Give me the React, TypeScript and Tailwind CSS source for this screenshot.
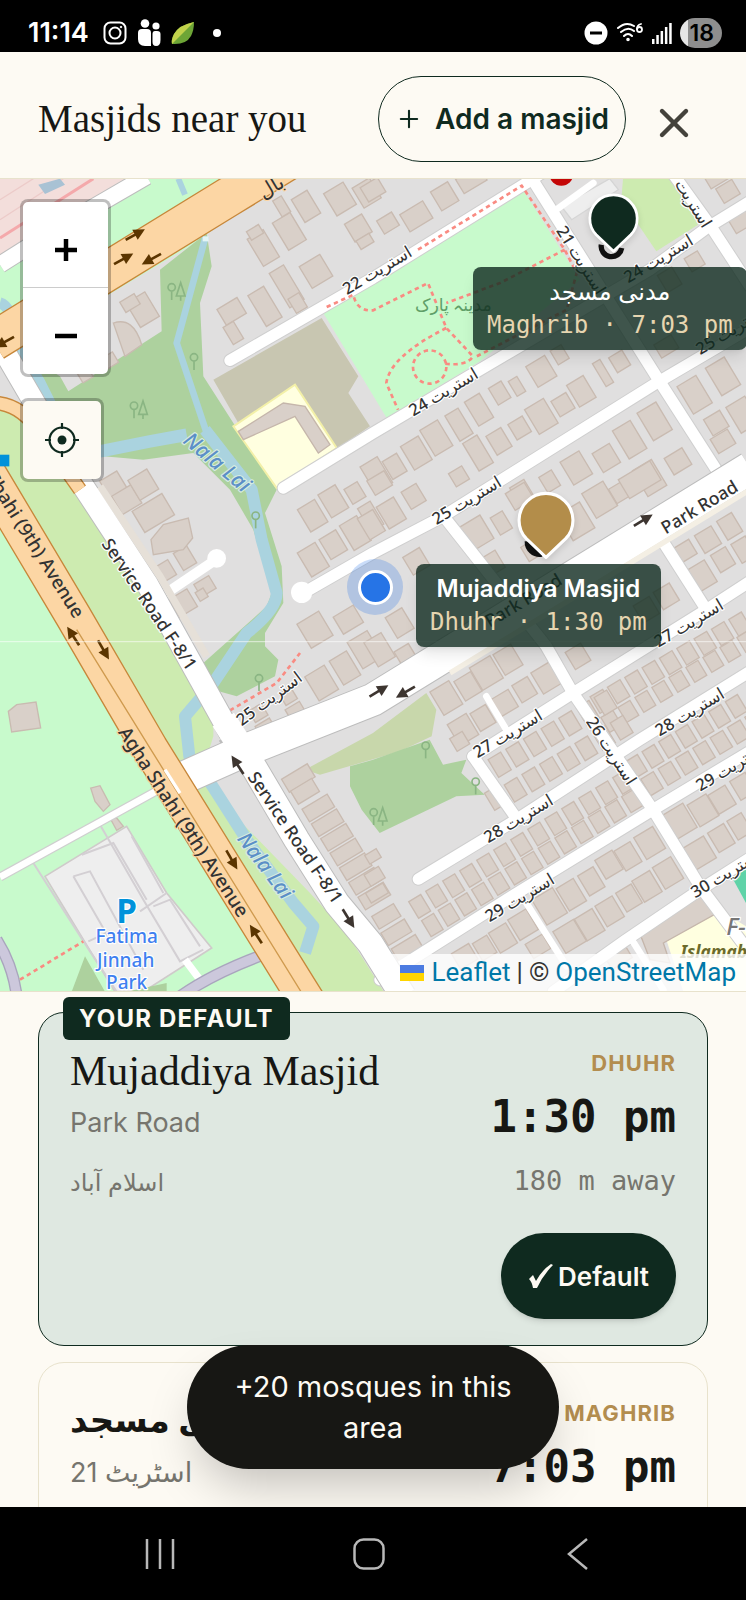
import React from "react";
import { Plus, X } from "lucide-react";

const SANS = "font-[Inter,'DejaVu_Sans',sans-serif]";
const SERIF = "font-['Liberation_Serif','DejaVu_Sans',serif]";
const MONO = "font-['DejaVu_Sans_Mono',monospace]";

type Box = [number, number, number, number];

/* Evenly stepped houses along a street. */
const row = (x: number, y: number, n: number, dx: number, dy: number, w: number, h: number): Box[] =>
  Array.from({ length: n }, (_, i) => [x + i * dx, y + i * dy, w, h]);

const northWest: Box[] = [
  [1020, 88, 68, 78], [918, 110, 55, 80], [868, 185, 62, 95], [845, 110, 30, 55], [790, 235, 56, 95],
  [765, 188, 42, 30], [1075, 175, 60, 62], [1095, 215, 45, 30], [1100, 70, 60, 70], [948, 305, 72, 76],
  [860, 350, 50, 120], [893, 400, 38, 50], [795, 410, 55, 108], [695, 425, 70, 55], [700, 490, 36, 60],
  [428, 420, 66, 85], [390, 400, 50, 36], [325, 575, 50, 36], [255, 615, 36, 36],
];

const northEast: Box[] = [
  [0, 60, 60, 50], [45, 160, 52, 46], [130, 140, 80, 60], [215, 80, 60, 66], [295, 30, 80, 50],
  [505, 605, 66, 72], [560, 555, 38, 48], [380, 670, 44, 58], [432, 650, 30, 52], [690, 610, 26, 80],
  [740, 575, 46, 52], [625, 665, 58, 76], [570, 705, 52, 54], [318, 720, 52, 84], [258, 765, 46, 88],
  [190, 805, 62, 90], [130, 850, 62, 82], [65, 890, 50, 62], [505, 740, 66, 86], [440, 775, 50, 54],
  [378, 815, 52, 66], [315, 850, 50, 96], [258, 920, 46, 46], [10, 915, 60, 90], [845, 755, 66, 96],
  [770, 810, 62, 98], [700, 865, 60, 66], [915, 875, 62, 58], [610, 895, 66, 80], [530, 935, 44, 54],
  [830, 925, 66, 90], [965, 675, 66, 96], [1050, 620, 66, 96], [1030, 760, 56, 56], [1050, 815, 60, 50],
  [1110, 735, 66, 90], [965, 275, 46, 46], [1100, 150, 60, 62], [1065, 65, 56, 50], [1030, 25, 60, 40],
  [445, 965, 50, 54], [890, 330, 50, 60], [880, 530, 60, 46], [745, 965, 60, 50],
];

const west: Box[] = [
  [340, 15, 60, 60], [380, 60, 68, 64], [430, 15, 66, 70], [460, 100, 104, 74], [495, 275, 50, 52],
  [555, 235, 46, 60], [550, 370, 62, 62], [615, 320, 52, 44], [605, 345, 28, 30], [938, 108, 60, 78],
  [1000, 65, 60, 80], [1065, 40, 46, 52], [940, 240, 62, 84], [1000, 195, 58, 70], [1066, 160, 60, 86],
  [1112, 110, 44, 80], [945, 450, 76, 84], [1045, 420, 70, 60], [1095, 510, 70, 92], [965, 610, 68, 84],
  [1035, 565, 60, 84], [890, 700, 50, 52], [800, 750, 50, 52], [775, 700, 44, 40], [865, 650, 40, 40],
];

const east: Box[] = [
  [122, 50, 52, 60], [55, 100, 60, 76], [-5, 135, 54, 74], [20, 10, 60, 50], [440, 50, 66, 58],
  [680, 60, 74, 86], [800, 0, 110, 66], [310, 160, 74, 82], [385, 130, 42, 60], [130, 245, 58, 62],
  [610, 125, 76, 90], [480, 210, 56, 50], [360, 250, 50, 60], [1070, 140, 52, 66], [1005, 180, 58, 62],
  [935, 215, 58, 50], [1050, 240, 52, 60], [985, 290, 66, 76], [1112, 210, 50, 66], [615, 530, 54, 60],
  [340, 580, 72, 78], [405, 540, 62, 72], [285, 620, 58, 68], [220, 655, 66, 82], [520, 595, 64, 74],
  [455, 630, 54, 60], [395, 670, 60, 60], [330, 715, 54, 62], [270, 750, 66, 74], [80, 430, 58, 72],
  [20, 510, 60, 84], [100, 530, 50, 60], [880, 350, 56, 60], [820, 390, 56, 60],
  ...row(685, 665, 9, 52, -29, 44, 58), ...row(715, 725, 9, 51, -30, 42, 52),
];

const southWest: Box[] = [
  [895, 115, 90, 46], [915, 155, 74, 46], ...row(955, 205, 7, 28, 44, 88, 44),
];

const southEast: Box[] = [
  ...row(380, 75, 7, 53, -31, 44, 62), ...row(428, 150, 7, 53, -31, 44, 60),
  ...row(140, 500, 13, 51, -31, 42, 58), ...row(178, 556, 13, 50, -31, 42, 56),
  ...row(790, 80, 7, 50, -30, 42, 58), ...row(837, 132, 7, 52, -31, 44, 58),
  [530, 500, 72, 88], [595, 465, 60, 78], [655, 425, 54, 70], [708, 375, 60, 66], [765, 350, 56, 70],
  [830, 310, 66, 76], [590, 590, 72, 76], [650, 555, 62, 76], [710, 515, 60, 72], [768, 475, 54, 66],
  [822, 440, 62, 74], [885, 400, 64, 76], [920, 245, 72, 84], [990, 212, 66, 76], [1047, 180, 60, 66],
  [1110, 140, 54, 66], [980, 340, 72, 76], [1045, 295, 56, 68], [1100, 260, 50, 66], [450, 555, 64, 72],
  [390, 595, 60, 70], [335, 625, 50, 60], [275, 650, 60, 54], [495, 620, 60, 50], [735, 650, 70, 50],
  [40, 530, 76, 44], [70, 578, 82, 44], [102, 625, 84, 44], [5, 410, 50, 40], [12, 460, 60, 34],
  [0, 350, 40, 30], [260, 5, 44, 44], [360, 180, 24, 60],
];

function Houses({ x, y, items }: { x: number; y: number; items: Box[] }) {
  return (
    <g transform={`translate(${x} ${y})`} fill="#d9d0c9" stroke="#c9bbb1" strokeWidth="4">
      {items.map(([cx, cy, w, h], i) => (
        <rect key={i} x={cx - w / 2} y={cy - h / 2} width={w} height={h} transform={`rotate(-31 ${cx} ${cy})`} />
      ))}
    </g>
  );
}

function Arrow({ x, y, r, c = "#3d3530" }: { x: number; y: number; r: number; c?: string }) {
  return (
    <g transform={`translate(${x} ${y}) rotate(${r})`} fill={c}>
      <rect x="-32" y="-4" width="36" height="8" />
      <path d="M0 -17 34 0 0 17Z" />
    </g>
  );
}

function Trees({ x, y, two = true }: { x: number; y: number; two?: boolean }) {
  return (
    <g transform={`translate(${x} ${y})`} fill="none" stroke="#8ab583" strokeWidth="5">
      <circle cx="-13" cy="-12" r="11" />
      <path d="M-13 0V26" />
      {two && <path d="M14 -26 1 14H27ZM14 14V28" />}
    </g>
  );
}

type LabelProps = { x: number; y: number; r?: number; size?: number; c?: string; halo?: string; italic?: boolean; weight?: number; children: string };
function Label({ x, y, r = 0, size = 53, c = "#333", halo = "#fff", italic, weight = 500, children }: LabelProps) {
  return (
    <text
      transform={`translate(${x} ${y}) rotate(${r})`}
      textAnchor="middle"
      dominantBaseline="central"
      fontFamily="'Noto Sans','DejaVu Sans',sans-serif"
      fontSize={size}
      fontStyle={italic ? "italic" : "normal"}
      fontWeight={weight}
      fill={c}
      stroke={halo}
      strokeWidth="7"
      strokeLinejoin="round"
      paintOrder="stroke"
    >
      {children}
    </text>
  );
}

const STREETS = [
  "M690 572 1119 325 1579 40 1640 0",
  "M1585 10 1969 620 2149 900",
  "M850 955 1119 790 1440 600 1950 300 2120 175 2250 95",
  "M2010 0 2129 165 2250 350",
  "M910 1270 1119 1150 1329 1040 1969 640 2250 475",
  "M1339 1050 1639 1430 1719 1570 1959 1920 2100 2150 2250 2350",
  "M1979 1100 2119 1320",
  "M1419 1760 1719 1570 2119 1320 2250 1235",
  "M1419 1760 1545 1940",
  "M1255 2128 1549 1950 1919 1710 2250 1505",
  "M1140 2430 1519 2190 1959 1920 2250 1745",
  "M1660 2466 1879 2310 2100 2160 2250 2065",
];
const LANES = ["M1459 1580 1519 1680", "M1579 2200 1700 2390", "M1889 2300 1990 2460", "M1655 130 1780 40"];

function MapCanvas() {
  return (
    <svg viewBox="0 27 2238 2439" preserveAspectRatio="xMidYMid slice" className="block size-full" role="img" aria-label="Street map">
      <rect width="2238" height="2480" fill="#e0dfdf" />

      {/* land use */}
      <path d="M0 0H900L560 235 0 570Z" fill="#c8facc" />
      <path d="M0 0H420L0 260Z" fill="#f3dedb" />
      <path d="M0 205 280 27" stroke="#f4a9ab" strokeWidth="9" fill="none" />
      <path d="M0 150 190 27M0 90 100 27" stroke="#eccbc9" strokeWidth="4" fill="none" />
      <path d="M115 45 180 27 195 45 135 73Z" fill="#a9c2d4" />
      <path d="M0 900 500 1720 960 2480H0Z" fill="#c8facc" />
      <path d="M0 690 60 720 240 960 640 1640V1700L600 1830 930 2170 1040 2290 1160 2480H960L500 1720 0 900Z" fill="#cdebb0" />
      <path d="M620 190 635 290 600 400 610 620 700 760 830 960 795 1030 845 1190 850 1300 795 1390 795 1430 835 1470 825 1520 710 1580 640 1560 610 1480 800 1310 815 1270 760 1080 690 960 580 850 430 870 310 860 150 720 50 540 180 620 205 665 485 485 480 300Z" fill="#add19e" />
      <path d="M970 430 1119 345 1569 60 1740 330 1440 575 1160 745Z" fill="#c8facc" />
      <path d="M640 630 965 445 1075 620 1045 670 1110 770 830 960Z" fill="#c8c6b1" />
      <path d="M700 770 885 645 1010 835 830 955Z" fill="#ffffe0" stroke="#f3f0a8" strokeWidth="6" />
      <path d="M715 785 850 700 915 710 990 825 955 850 885 740 730 810Z" fill="#d9d0c9" stroke="#c5b6ab" strokeWidth="4" />
      <path d="M1869 27H2019L2094 165 1969 245 1864 90Z" fill="#cdebb0" />
      <path d="M1684 110 1829 27 1855 60 1715 150Z" fill="#eee" stroke="#d5d5d5" strokeWidth="4" />
      <path d="M915 1800 1119 1690 1279 1570 1309 1620 1295 1700 1200 1745 960 1815Z" fill="#c8d7ab" />
      <path d="M1050 1790 1119 1770 1289 1710 1329 1785 1399 1770 1384 1810 1454 1875 1369 1880 1139 1990 1085 1920 1050 1850Z" fill="#add19e" />
      <path d="M1999 2310 2164 2225 2238 2270V2466H2050Z" fill="#ffffe0" />
      <path d="M1919 2290 2119 2170 2170 2220 1990 2320 2010 2380 1950 2370Z" fill="#d9d0c9" stroke="#c5b6ab" strokeWidth="4" />
      <path d="M2200 2130 2238 2085V2200Z" fill="#5fd3a8" />

      {/* water */}
      <g fill="none" stroke="#aad3df" strokeLinejoin="round">
        <path d="M535 27 555 75" strokeWidth="18" />
        <path d="M0 400Q40 410 60 540L120 640 160 720" strokeWidth="34" />
        <path d="M300 845 450 815 560 795" strokeWidth="38" />
        <path d="M617 200 530 520 620 790" strokeWidth="20" />
        <path d="M617 200 617 215" stroke="#e4f5f5" strokeWidth="18" />
        <path d="M615 780 755 960 785 1110 830 1270Q830 1320 740 1390L640 1540 555 1640 568 1760 625 1830 740 2010 880 2200 940 2270 915 2350" strokeWidth="36" />
      </g>

      <Houses x={0} y={0} items={northWest} />
      <Houses x={1119} y={0} items={northEast} />
      <Houses x={0} y={930} items={west} />
      <Houses x={1119} y={930} items={east} />
      <Houses x={0} y={1710} items={southWest} />
      <Houses x={1119} y={1710} items={southEast} />
      <g fill="#d9d0c9" stroke="#c9bbb1" strokeWidth="4">
        <path d="M340 460Q400 440 425 525L375 560Z" />
        <path d="M453 1110 490 1065 565 1045 578 1105 550 1140 460 1155Z" />
        <path d="M25 1625 50 1605 108 1597 122 1675 35 1687Z" />
        <path d="M272 1855 300 1848 330 1905 310 1925 285 1895ZM330 1945 350 1945 370 1970 350 1982Z" />
      </g>

      {/* car park */}
      <path d="M135 2120 380 1970 500 2170 635 2335 430 2466H345Z" fill="#eee" stroke="#cfcaca" strokeWidth="5" />
      <g fill="none" stroke="#d3cfd3" strokeWidth="6">
        <path d="M100 2080 270 2345 350 2466M300 1965 430 2190 540 2375 610 2340M220 2120 270 2105 430 2400M220 2120 330 2310M245 2055 340 2020 440 2190M395 2000 490 2170M265 2315 330 2285M420 2225 500 2170M460 2210 510 2190 600 2330" />
      </g>
      <path d="M255 2360 215 2466H315ZM380 2466 500 2440V2466Z" fill="#add19e" />

      {/* residential streets */}
      <g fill="none" stroke="#cfcfcf" strokeWidth="40" strokeLinecap="round" strokeLinejoin="round">
        {STREETS.map((d) => <path key={d} d={d} />)}
      </g>
      <g fill="none" stroke="#fff" strokeWidth="34" strokeLinecap="round" strokeLinejoin="round">
        {STREETS.map((d) => <path key={d} d={d} />)}
      </g>
      <g fill="none" stroke="#fff" strokeWidth="20" strokeLinecap="round">
        {LANES.map((d) => <path key={d} d={d} />)}
      </g>
      <path d="M470 1290 650 1168" stroke="#fff" strokeWidth="30" fill="none" />
      <circle cx="650" cy="1166" r="28" fill="#fff" />
      <circle cx="905" cy="1268" r="32" fill="#fff" />

      {/* park paths */}
      <path d="M0 2122 480 1858" stroke="#cfcfcf" strokeWidth="28" fill="none" />
      <path d="M0 2122 480 1858" stroke="#fff" strokeWidth="20" fill="none" />
      <path d="M555 2370 600 2430" stroke="#fff" strokeWidth="22" fill="none" />
      <path d="M-10 2310Q40 2390 50 2480M540 2480Q640 2410 790 2355" stroke="#a9a5bd" strokeWidth="36" fill="none" />
      <path d="M-10 2310Q40 2390 50 2480M540 2480Q640 2410 790 2355" stroke="#ccc8dc" strokeWidth="28" fill="none" />
      <g fill="none" stroke="#f98b82" strokeWidth="8" strokeDasharray="13 11">
        <path d="M980 412 1060 375Q1070 425 1119 422L1284 340 1339 475 1419 560Q1400 590 1334 582" />
        <path d="M1254 240 1565 48 1694 240 1730 310 1700 420 1430 560M1694 240 1500 340 1339 400M1339 475Q1170 560 1159 640L1194 720" />
        <circle cx="1289" cy="592" r="50" />
        <path d="M690 1622 830 1540 900 1450M60 2430 250 2315" />
      </g>

      {/* Service Road and Park Road */}
      <g fill="none" strokeLinejoin="round">
        <path d="M10 540 250 950 440 1240 690 1690" stroke="#bdbdbd" strokeWidth="70" />
        <path d="M690 1690 760 1790 890 2010 1010 2200 1110 2320 1210 2480" stroke="#bdbdbd" strokeWidth="82" />
        <path d="M560 1820 740 1740 1119 1590 2250 895" stroke="#bdbdbd" strokeWidth="102" />
        <path d="M0 285 190 165 440 20" stroke="#bdbdbd" strokeWidth="54" />
        <path d="M0 285 190 165 440 20" stroke="#fff" strokeWidth="48" />
        <path d="M300 950 480 1220 620 1460" stroke="#e6e0d8" strokeWidth="22" />
        <path d="M10 540 250 950 440 1240 690 1690" stroke="#fff" strokeWidth="64" />
        <path d="M670 1650 760 1790 890 2010 1010 2200 1110 2320 1210 2480" stroke="#fff" strokeWidth="76" />
        <path d="M560 1820 740 1740 1119 1590 2250 895" stroke="#fff" strokeWidth="96" />
        <path d="M1350 1510 2250 960" stroke="#f4efe4" strokeWidth="16" />
      </g>

      {/* trunk roads */}
      <g fill="none" strokeLinejoin="round">
        <path d="M-20 700Q60 700 120 790L240 960" stroke="#c7873a" strokeWidth="44" />
        <path d="M-20 700Q60 700 120 790L240 960" stroke="#fcd6a4" strokeWidth="36" />
        <path d="M-20 515 680 85 900 -50" stroke="#c7873a" strokeWidth="122" />
        <path d="M-20 515 680 85 900 -50" stroke="#fcd6a4" strokeWidth="114" />
        <path d="M-60 870 220 1340 450 1735 903 2466 950 2540" stroke="#c7873a" strokeWidth="112" />
        <path d="M-60 870 220 1340 450 1735 903 2466 950 2540" stroke="#fcd6a4" strokeWidth="104" />
        <path d="M230 1380 450 1735 903 2466" stroke="#cf9a4e" strokeWidth="4" />
        <path d="M495 1800 540 1870" stroke="#fff" strokeWidth="10" />
      </g>
      <path d="M0 855H28V890H0Z" fill="#0092da" />

      <Arrow x={405} y={195} r={-29} c="#5b3500" /><Arrow x={370} y={268} r={-29} c="#5b3500" />
      <Arrow x={455} y={268} r={151} c="#5b3500" /><Arrow x={14} y={517} r={151} c="#5b3500" />
      <Arrow x={220} y={1400} r={237} c="#5b3500" /><Arrow x={310} y={1440} r={60} c="#5b3500" />
      <Arrow x={695} y={2070} r={60} c="#5b3500" /><Arrow x={768} y={2294} r={237} c="#5b3500" />
      <Arrow x={713} y={1786} r={237} /><Arrow x={1045} y={2246} r={58} />
      <Arrow x={1929} y={1052} r={-31} /><Arrow x={1136} y={1564} r={-31} /><Arrow x={1217} y={1567} r={150} />

      <Trees x={528} y={365} /><Trees x={595} y={575} two={false} /><Trees x={415} y={720} />
      <Trees x={780} y={1050} two={false} /><Trees x={790} y={1538} two={false} /><Trees x={1134} y={1940} />
      <Trees x={1290} y={1740} two={false} /><Trees x={1440} y={1848} two={false} />

      <Label x={812} y={50} r={-31} size={60} halo="#fcd6a4">بال</Label>
      <Label x={1130} y={300} r={-31} size={50}>استریت 22</Label>
      <Label x={1329} y={665} r={-31} size={50}>استریت 24</Label>
      <Label x={1974} y={265} r={-31} size={50}>استریت 24</Label>
      <Label x={1745} y={270} r={58} size={50}>استریت 21</Label>
      <Label x={2082} y={100} r={58} size={50}>استریت</Label>
      <Label x={2190} y={480} r={-31} size={50}>استریت 25</Label>
      <Label x={1399} y={990} r={-31} size={50}>استریت 25</Label>
      <Label x={806} y={1585} r={-37} size={50}>استریت 25</Label>
      <Label x={2065} y={1358} r={-31} size={50}>استریت 27</Label>
      <Label x={1522} y={1690} r={-31} size={50}>استریت 27</Label>
      <Label x={2068} y={1625} r={-31} size={50}>استریت 28</Label>
      <Label x={1554} y={1945} r={-31} size={50}>استریت 28</Label>
      <Label x={1558} y={2182} r={-31} size={50}>استریت 29</Label>
      <Label x={2190} y={1790} r={-31} size={50}>استریت 29</Label>
      <Label x={2175} y={2110} r={-31} size={50}>استریت 30</Label>
      <Label x={1836} y={1742} r={57} size={50}>استریت 26</Label>
      <Label x={1360} y={402} size={52} c="#5f9f68" halo="#c8facc">مدینہ پارک</Label>
      <Label x={2097} y={1010} r={-31}>Park Road</Label>
      <Label x={1569} y={1290} r={-31}>Park Road</Label>
      <Label x={450} y={1302} r={56}>Service Road F-8/1</Label>
      <Label x={888} y={2002} r={56}>Service Road F-8/1</Label>
      <Label x={68} y={1060} r={58} size={56} halo="#fcd6a4">Agha Shahi (9th) Avenue</Label>
      <Label x={552} y={1956} r={57} size={57} halo="#fcd6a4">Agha Shahi (9th) Avenue</Label>
      <Label x={654} y={875} r={40} size={64} c="#5b8fc7" halo="#d6ecdf" italic>Nala Lai</Label>
      <Label x={798} y={2086} r={53} size={62} c="#5b8fc7" halo="#d6ecdf" italic>Nala Lai</Label>
      <Label x={380} y={2222} size={100} c="#0092da" weight={700}>P</Label>
      <Label x={380} y={2300} size={57} c="#3f7ff0">Fatima</Label>
      <Label x={377} y={2370} size={57} c="#3f7ff0">Jinnah</Label>
      <Label x={380} y={2438} size={57} c="#3f7ff0">Park</Label>
      <Label x={2228} y={2268} size={72} c="#777" italic>F-8</Label>
      <Label x={2172} y={2344} size={52} c="#6b6a2b" halo="#ffffe0" italic weight={700}>Islamabad</Label>

      <circle cx="1684" cy="12" r="36" fill="#c40606" />
      <g fill="none" stroke="#111" strokeWidth="16">
        <path d="M1804 225A30 30 0 1 0 1865 235" />
        <path d="M1585 1115A34 34 0 0 0 1625 1150" strokeWidth="22" />
      </g>
      <path d="M0 1416H2238" stroke="#fff" strokeOpacity=".65" strokeWidth="3" />
    </svg>
  );
}

function Pin({ fill, className }: { fill: string; className: string }) {
  return (
    <svg viewBox="0 0 56 68" className={`absolute drop-shadow-md ${className}`} aria-hidden="true">
      <path d="M28 65 9 47A26 26 0 1 1 47 47Z" fill={fill} stroke="#fff" strokeWidth="3" strokeLinejoin="round" />
    </svg>
  );
}

function Tooltip({ name, time, className, weight }: { name: string; time: string; className: string; weight: string }) {
  return (
    <div className={`absolute flex flex-col items-center rounded-lg bg-[#0f2a1f]/80 px-[14px] pt-2 pb-2 whitespace-nowrap shadow-lg ${className}`}>
      <span className={`${SANS} text-[24px] leading-[33px] text-white ${weight}`}>{name}</span>
      <span className={`${MONO} text-[24px] leading-[34px] text-[#e6d5b0]`}>{time}</span>
    </div>
  );
}

type CardProps = { name: string; street: string; city: string; prayer: string; time: string; distance: string; isDefault?: boolean };
function MasjidCard({ name, street, city, prayer, time, distance, isDefault }: CardProps) {
  return (
    <article className={`relative flex shrink-0 justify-between rounded-[26px] border px-[31px] pt-[34px] pb-[26px] ${isDefault ? "border-[#0f2a1f] bg-[#dfe8e1]" : "border-[#e8e2cc] bg-[#fdfaf3]"}`}>
      {isDefault && (
        <span className={`${SANS} absolute -top-4 left-6 rounded-md bg-[#0f2a1f] px-4 text-[24px] leading-[43px] font-bold tracking-wider text-[#fdfaf3]`}>YOUR DEFAULT</span>
      )}
      <div className="flex flex-col items-start">
        <h2 className={`${SERIF} leading-[48px] text-[#171714] ${isDefault ? "text-[42px] font-normal" : "text-[34px] font-bold"}`}>{name}</h2>
        <p className={`${SANS} mt-2 text-[27px] leading-[40px] text-[#76756e]`}>{street}</p>
        <p className={`${SANS} mt-5 text-[24px] leading-[40px] text-[#76756e]`}>{city}</p>
      </div>
      <div className="flex flex-col items-end">
        <span className={`${SANS} text-[22px] leading-8 font-bold tracking-wider text-[#b38d4f]`}>{prayer}</span>
        <span className={`${MONO} mt-2 text-[44px] leading-[60px] font-bold text-[#171714]`}>{time}</span>
        <span className={`${MONO} mt-4 text-[27px] leading-9 text-[#76756e]`}>{distance}</span>
        <button type="button" className={`${SANS} mt-[34px] flex h-[86px] items-center gap-1 rounded-full bg-[#0f2a1f] px-[27px] text-[26px] font-semibold text-[#fdfaf3] shadow-md`}>
          {isDefault && (
            <svg viewBox="0 0 26 26" className="size-[26px]" aria-hidden="true">
              <path d="M1 16 5 12 8 18Q14 7 23 1L25 2Q15 12 9 25H5Q4 19 1 16Z" fill="currentColor" />
            </svg>
          )}
          {isDefault ? "Default" : "Set default"}
        </button>
      </div>
    </article>
  );
}

function StatusBar() {
  return (
    <div className={`${SANS} flex h-13 shrink-0 items-center justify-between bg-black pt-3.5 pr-6 pl-7 text-white`}>
      <div className="flex items-center gap-2.5">
        <span className="mr-1 text-[27px] leading-8 font-semibold">11:14</span>
        <svg viewBox="0 0 24 24" className="size-6" fill="none" stroke="#fff" strokeWidth="2" aria-hidden="true">
          <rect x="1.5" y="1.5" width="21" height="21" rx="6" /><circle cx="12" cy="12" r="5.500" /><circle cx="18" cy="6" r=".8" fill="#fff" strokeWidth="1" />
        </svg>
        <svg viewBox="0 0 24 28" className="h-7 w-6" fill="#fff" aria-hidden="true">
          <circle cx="8" cy="4.500" r="4.300" /><circle cx="19" cy="7" r="3.600" />
          <path d="M1 14Q1 10 5 10H10Q14 10 14 14V27H8Q1 27 1 20Z" /><path d="M15.500 15Q15.500 12 18 12H20Q23.500 12 23.500 15V21Q23.500 27 19 27 15.500 27 15.500 23Z" />
        </svg>
        <svg viewBox="0 0 24 24" className="size-6" aria-hidden="true">
          <path d="M23 1Q8 4 3 13 0 19 1 23 15 24 20 15 23 9 23 1Z" fill="#6da536" />
          <path d="M23 1Q8 4 3 13 0 19 1 23 12 12 23 1Z" fill="#c1d24b" />
        </svg>
        <span className="ml-2 size-2 rounded-full bg-white" />
      </div>
      <div className="flex items-center gap-2">
        <svg viewBox="0 0 24 24" className="size-6" aria-hidden="true"><circle cx="12" cy="12" r="11.500" fill="#fff" /><path d="M6 12H18" stroke="#000" strokeWidth="3" /></svg>
        <svg viewBox="0 0 28 24" className="h-6 w-7" fill="none" stroke="#fff" strokeWidth="2" strokeLinecap="round" aria-hidden="true">
          <path d="M2 7Q10 0 18 5M5 11Q12 5 18 10M8 15Q12 11 16 15" /><circle cx="12" cy="18.500" r=".8" fill="#fff" />
          <path d="M25 3Q21 4 21 8" strokeWidth="1.800" /><circle cx="23.500" cy="8.500" r="2.500" strokeWidth="1.800" />
        </svg>
        <svg viewBox="0 0 20 22" className="h-[22px] w-5" fill="#fff" aria-hidden="true">
          <path d="M0 17H2.500V22H0ZM4.300 13H6.800V22H4.300ZM8.600 9H11.100V22H8.600ZM12.900 5H15.400V22H12.900ZM17.200 1H19.700V22H17.200Z" />
        </svg>
        <span className="rounded-full bg-[linear-gradient(90deg,#e6e6e6_18%,#8e8e8e_18%)] pr-2 pl-[10px] text-[23px] leading-[30px] font-semibold text-black">18</span>
      </div>
    </div>
  );
}

export default function App() {
  return (
    <div className={`${SANS} flex h-screen flex-col bg-[#fdfaf3]`}>
      <StatusBar />
      <header className="flex shrink-0 items-center justify-between border-b border-[#e8e2cc] pt-6 pr-12 pb-4 pl-[38px]">
        <h1 className={`${SERIF} text-[39px] leading-[48px] text-[#171714]`}>Masjids near you</h1>
        <div className="flex items-center gap-6">
          <button type="button" className="flex h-[86px] items-center gap-3 rounded-full border border-[#0f2a1f] px-4 text-[28px] font-semibold whitespace-nowrap text-[#0f2a1f]">
            <Plus className="size-7" strokeWidth={1.8} />
            Add a masjid
          </button>
          <button type="button" aria-label="Close" className="mt-2 text-[#44423b]">
            <X className="size-12" strokeWidth={2.2} />
          </button>
        </div>
      </header>

      <main className="relative min-h-0 flex-[813] overflow-hidden">
        <MapCanvas />

        <div className="absolute top-5 left-5 flex w-[91px] flex-col overflow-hidden rounded-lg border-[3px] border-black/25 bg-white bg-clip-padding">
          <button type="button" aria-label="Zoom in" className="flex h-[86px] items-center justify-center border-b border-[#ccc] pt-2.5">
            <svg viewBox="0 0 22 22" className="size-[22px]" aria-hidden="true"><path d="M0 11H22M11 0V22" stroke="#000" strokeWidth="4.500" /></svg>
          </button>
          <button type="button" aria-label="Zoom out" className="flex h-[86px] items-center justify-center pt-2.5">
            <svg viewBox="0 0 22 22" className="size-[22px]" aria-hidden="true"><path d="M0 11H22" stroke="#000" strokeWidth="4.500" /></svg>
          </button>
        </div>
        <button type="button" aria-label="Show my location" className="absolute top-[219px] left-5 flex size-[84px] items-center justify-center rounded-lg border-[3px] border-black/25 bg-[#fdfaf3] bg-clip-padding">
          <svg viewBox="0 0 34 34" className="size-[34px]" fill="none" stroke="#0f2a1f" strokeWidth="2.200" aria-hidden="true">
            <circle cx="17" cy="17" r="12.500" /><circle cx="17" cy="17" r="4.500" fill="#0f2a1f" stroke="none" /><path d="M17 0V6M17 28V34M0 17H6M28 17H34" />
          </svg>
        </button>

        <span className="absolute top-[380px] left-[347px] flex size-14 items-center justify-center rounded-full bg-[#2674e6]/25">
          <span className="size-[35px] rounded-full border-[3px] border-white bg-[#2674e6]" />
        </span>
        <Pin fill="#0f2a1f" className="top-[13px] left-[588px] w-[51px]" />
        <Tooltip name="مدنی مسجد" time="Maghrib · 7:03 pm" weight="font-normal" className="top-[88px] left-[473px]" />
        <Pin fill="#b38d4a" className="top-[311px] left-[517px] w-[58px]" />
        <Tooltip name="Mujaddiya Masjid" time="Dhuhr · 1:30 pm" weight="font-semibold" className="top-[385px] left-[416px]" />

        <div className="absolute right-0 bottom-0 flex items-center gap-1.5 bg-white/80 px-2.5 font-[Roboto,sans-serif] text-[26px] leading-[37px] whitespace-nowrap text-[#333]">
          <a href="#leaflet" className="flex items-center gap-2 text-[#0078a8]">
            <svg viewBox="0 0 24 16" className="h-4 w-6" aria-hidden="true"><path d="M0 0H24V8H0Z" fill="#4c7be1" /><path d="M0 8H24V16H0Z" fill="#ffd500" /></svg>
            Leaflet
          </a>
          <span>|</span>
          <span>©</span>
          <a href="#openstreetmap" className="text-[#0078a8]">OpenStreetMap</a>
        </div>
      </main>

      <section className="relative flex min-h-0 flex-[515] flex-col border-t border-[#e8e2cc] px-[38px]">
        <div className="flex min-h-0 flex-col gap-4 overflow-hidden pt-5">
          <MasjidCard name="Mujaddiya Masjid" street="Park Road" city="اسلام آباد" prayer="DHUHR" time="1:30 pm" distance="180 m away" isDefault />
          <MasjidCard name="مدنی مسجد" street="اسٹریٹ 21" city="اسلام آباد" prayer="MAGHRIB" time="7:03 pm" distance="350 m away" />
        </div>
        <div role="status" className="absolute bottom-[38px] left-1/2 w-[372px] -translate-x-1/2 rounded-full bg-[#171714] px-10 py-[21px] text-center text-[29px] leading-[41px] text-[#fdfaf3] shadow-2xl">
          +20 mosques in this area
        </div>
      </section>

      <nav aria-label="System" className="flex h-[93px] shrink-0 items-center justify-around bg-black pr-16 pl-14 text-[#b8b8b8]">
        <button type="button" aria-label="Recent apps">
          <svg viewBox="0 0 32 32" className="size-8" fill="none" stroke="currentColor" strokeWidth="2.500" aria-hidden="true"><path d="M3 1V31M16 1V31M29 1V31" /></svg>
        </button>
        <button type="button" aria-label="Home">
          <svg viewBox="0 0 32 32" className="size-8" fill="none" stroke="currentColor" strokeWidth="2.500" aria-hidden="true"><rect x="1.500" y="1.500" width="29" height="29" rx="9" /></svg>
        </button>
        <button type="button" aria-label="Back">
          <svg viewBox="0 0 32 32" className="size-8" fill="none" stroke="currentColor" strokeWidth="2.500" aria-hidden="true"><path d="M25 1 7 16 25 31" /></svg>
        </button>
      </nav>
    </div>
  );
}
